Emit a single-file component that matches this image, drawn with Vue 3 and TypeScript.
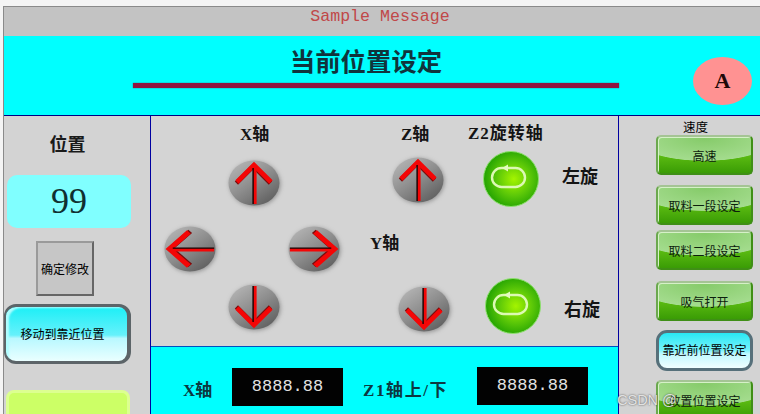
<script setup lang="ts">
type Dir = 'up' | 'down' | 'left' | 'right'

const arrows: { cls: string; dir: Dir }[] = [
  { cls: 'x-up', dir: 'up' },
  { cls: 'z-up', dir: 'up' },
  { cls: 'y-left', dir: 'left' },
  { cls: 'y-right', dir: 'right' },
  { cls: 'x-down', dir: 'down' },
  { cls: 'z-down', dir: 'down' }
]

// the glyph is drawn pointing up, the others get flipped so the dark side of the stem stays right
const turns: Record<Dir, string> = {
  up: '',
  down: 'translate(26 23) scale(1 -1) translate(-26 -23)',
  left: 'translate(26 23) scale(1.15 1) rotate(-90) scale(-1 1) translate(-26 -23)',
  right: 'translate(26 23) scale(1.15 1) rotate(90) translate(-26 -23)'
}

const speedButtons = [
  { text: '高速', kind: 'green', cls: 'b1' },
  { text: '取料一段设定', kind: 'green', cls: 'b2' },
  { text: '取料二段设定', kind: 'green', cls: 'b3' },
  { text: '吸气打开', kind: 'green', cls: 'b4' },
  { text: '靠近前位置设定', kind: 'cyan', cls: 'b5' },
  { text: '放置位置设定', kind: 'green', cls: 'b6' }
]

const spins = [
  { cls: 'spin-left' },
  { cls: 'spin-right' }
]
</script>

<template>
<div class="page">
  <div class="message">Sample Message</div>

  <div class="banner">
    <div class="title-block">
      <h1>当前位置设定</h1>
      <div class="rule"></div>
    </div>
    <div class="user-badge">A</div>
  </div>

  <div class="main">
    <div class="left">
      <div class="left-title">位置</div>
      <div class="value-box">99</div>
      <div class="confirm">确定修改</div>
      <div class="move-btn">移动到靠近位置</div>
      <div class="lime-btn"></div>
    </div>

    <div class="center">
      <div class="controls">
        <div class="label lb-x">X轴</div>
        <div class="label lb-z">Z轴</div>
        <div class="label lb-z2">Z2旋转轴</div>
        <div class="label lb-y">Y轴</div>
        <div class="label lb-l">左旋</div>
        <div class="label lb-r">右旋</div>

        <svg v-for="a in arrows" :key="a.cls" :class="['arrow', a.cls]" viewBox="0 0 52 46" width="52" height="46">
          <defs>
            <linearGradient :id="'ball-' + a.cls" x1="0.15" y1="0.05" x2="0.85" y2="0.95">
              <stop offset="0" stop-color="#b4b4b4" />
              <stop offset="0.5" stop-color="#8c8c8c" />
              <stop offset="1" stop-color="#5e5e5e" />
            </linearGradient>
          </defs>
          <ellipse cx="26" cy="23" rx="25.5" ry="22.5" :fill="'url(#ball-' + a.cls + ')'" />
          <g :transform="turns[a.dir]">
            <path d="M9 22 L26 5 L43 22" fill="none" stroke="#7a0c0c" stroke-width="4.6" transform="translate(-0.6 1.2)" />
            <path d="M9 22 L26 5 L43 22" fill="none" stroke="#f40606" stroke-width="4.6" />
            <path d="M25.2 8 V44" stroke="#120404" stroke-width="1.6" />
            <path d="M27.2 6 V44" stroke="#f40606" stroke-width="2.8" />
          </g>
        </svg>

        <svg v-for="s in spins" :key="s.cls" :class="['spin', s.cls]" viewBox="0 0 56 56" width="56" height="56">
          <defs>
            <radialGradient :id="'glow-' + s.cls" cx="0.55" cy="0.5" r="0.55">
              <stop offset="0" stop-color="#a4f400" />
              <stop offset="0.55" stop-color="#5cc808" />
              <stop offset="1" stop-color="#22a202" />
            </radialGradient>
          </defs>
          <circle cx="28" cy="28" r="27.5" :fill="'url(#glow-' + s.cls + ')'" stroke="#8fe070" stroke-width="1" />
          <rect x="9" y="17" width="33" height="19" rx="9.5" fill="none" stroke="#dcf9b4" stroke-width="2.4" />
          <path d="M19 17 L25 13.5 V20.5 Z" fill="#e4fcc0" />
        </svg>
      </div>

      <div class="readouts">
        <div class="read-label first">X轴</div>
        <div class="digits">8888.88</div>
        <div class="read-label second">Z1轴上/下</div>
        <div class="digits raised">8888.88</div>
      </div>
    </div>

    <div class="right">
      <div class="speed-title">速度</div>
      <div v-for="b in speedButtons" :key="b.text" :class="['side-btn', b.kind, b.cls]">{{ b.text }}</div>
    </div>
  </div>

  <div class="watermark">CSDN @</div>
</div>
</template>

<style>
html, body {
  margin: 0;
  background: #f4f4f4;
  overflow: hidden;
}
</style>

<style scoped>
.page {
  position: relative;
  width: 756px;
  height: 407px;
  margin: 6px 0 0 3px;
  border-top: 1px solid #8a8a8a;
  border-left: 1px solid #8a8a8a;
  overflow: hidden;
  font-family: "Liberation Serif", "Noto Sans CJK SC", serif;
  color: #000;
}

.message {
  height: 29px;
  background: #c3c3c3;
  color: #c04848;
  font: 16.6px/20px "Liberation Mono", monospace;
  text-align: center;
  padding-right: 4px;
  box-sizing: border-box;
}

.banner {
  height: 80px;
  background: #00ffff;
  display: grid;
  grid-template-columns: 129px 486px 1fr;
  border-bottom: 1px solid #000080;
  box-sizing: border-box;
}

.title-block {
  grid-column: 2;
}

h1 {
  margin: 0;
  padding: 10px 20px 0 0;
  height: 47px;
  box-sizing: border-box;
  text-align: center;
  font-size: 25.4px;
  line-height: 32px;
  font-weight: 700;
  color: #10343c;
}

.rule {
  height: 5px;
  background: #90153f;
  box-shadow: 0 0 1px #3a4a60;
}

.user-badge {
  grid-column: 3;
  width: 59px;
  height: 48px;
  margin: 21px 0 0 74px;
  border-radius: 50%;
  background: #ff9292;
  font: 700 22px/48px "Liberation Serif", serif;
  text-align: center;
  color: #200808;
}

.main {
  display: grid;
  grid-template-columns: 146px 469px 1fr;
  height: 298px;
  background: #d3d3d3;
}

.left {
  display: flex;
  flex-direction: column;
  align-items: flex-start;
}

.left-title {
  width: 127px;
  margin-top: 17px;
  text-align: center;
  font-size: 18px;
  line-height: 24px;
  font-weight: 700;
  color: #1a1a1a;
}

.value-box {
  width: 124px;
  height: 53px;
  margin: 18px 0 0 3px;
  border-radius: 10px;
  background: #80ffff;
  text-align: center;
  font: 36px/53px "Liberation Serif", serif;
  color: #103030;
}

.confirm {
  width: 58px;
  height: 55px;
  margin: 13px 0 0 32px;
  box-sizing: border-box;
  border: 2px solid;
  border-color: #9a9a9a #666 #666 #9a9a9a;
  background: #c6c6c6;
  font: 12px/51px "Noto Sans CJK SC", sans-serif;
  text-align: center;
}

.move-btn {
  width: 127px;
  height: 60px;
  margin-top: 8px;
  padding-right: 8px;
  box-sizing: border-box;
  border: solid #5c6468;
  border-width: 3px 4px 3px 2px;
  border-radius: 12px;
  background: linear-gradient(#1ceff6 0, #66f1fb 52%, #b8f8ff 58%, #eaffff 100%);
  box-shadow: inset 5px 3px 2px -2px #b0fdff;
  font: 12px/54px "Noto Sans CJK SC", sans-serif;
  text-align: center;
}

.lime-btn {
  width: 124px;
  height: 40px;
  margin: 26px 0 0 2px;
  box-sizing: border-box;
  border: 3px solid #dcff90;
  border-radius: 8px;
  background: #ccff66;
}

.center {
  border-left: 1px solid #0000a0;
  border-right: 1px solid #0000a0;
  display: flex;
  flex-direction: column;
}

.controls {
  height: 230px;
  display: grid;
  grid-template-columns: 76px 61px 77px 26px 89px 76px 1fr;
  grid-template-rows: 33px 64px 64px 1fr;
  background: #d4d4d4;
}

.label {
  font-size: 17px;
  line-height: 20px;
  font-weight: 700;
  color: #141414;
  white-space: nowrap;
  justify-self: start;
}

.lb-x { grid-area: 1 / 2; margin: 9px 0 0 13px; }
.lb-z { grid-area: 1 / 5; margin: 9px 0 0 10px; }
.lb-z2 { grid-area: 1 / 5 / 1 / 7; margin: 8px 0 0 77px; letter-spacing: 1px; }
.lb-y { grid-area: 3 / 4 / 3 / 6; margin: 21px 0 0 5px; }
.lb-l { grid-area: 2 / 7; margin: 18px 0 0 6px; font-size: 18px; }
.lb-r { grid-area: 4 / 7; margin: 23px 0 0 8px; font-size: 18px; }

.arrow {
  justify-self: start;
  filter: drop-shadow(1px 1px 2px rgba(90, 90, 90, 0.55));
}

.x-up { grid-area: 2 / 2; margin: 11px 0 0 1px; }
.z-up { grid-area: 2 / 5; margin: 8px 0 0 1px; }
.y-left { grid-area: 3 / 1; margin: 13px 0 0 13px; }
.y-right { grid-area: 3 / 3; margin: 13px 0 0 0; }
.x-down { grid-area: 4 / 2; margin: 7px 0 0 1px; }
.z-down { grid-area: 4 / 5; margin: 9px 0 0 7px; }

.spin {
  justify-self: start;
}

.spin-left { grid-area: 2 / 6; margin: 2px 0 0 3px; }
.spin-right { grid-area: 4 / 6; margin: 1px 0 0 5px; }

.readouts {
  flex: 1;
  border-top: 1px solid #0050c0;
  background: #00ffff;
  display: flex;
  align-items: flex-start;
  padding: 21px 0 0 32px;
}

.read-label {
  font-size: 17px;
  line-height: 20px;
  font-weight: 700;
  color: #0c3840;
  margin-top: 13px;
  white-space: nowrap;
}

.read-label.first { width: 49px; }
.read-label.second { width: 114px; margin-left: 20px; letter-spacing: 1.6px; }

.digits {
  width: 111px;
  height: 38px;
  background: #020202;
  color: #e2e2e2;
  font: 17px/38px "Liberation Mono", monospace;
  text-align: center;
}

.digits.raised {
  margin-top: -1px;
}

.right {
  position: relative;
  display: flex;
  flex-direction: column;
  align-items: flex-start;
}

.speed-title {
  margin: 2px 0 0 64px;
  height: 17px;
  font: 12.5px/17px "Noto Sans CJK SC", sans-serif;
}

.side-btn {
  width: 97px;
  height: 40px;
  margin-left: 37px;
  flex: none;
  box-sizing: border-box;
  font: 12px/38px "Noto Sans CJK SC", sans-serif;
  text-align: center;
  white-space: nowrap;
}

.side-btn.green {
  border: 2px solid;
  border-color: #a4c494 #3f8f16 #3f8f16 #6ba84e;
  border-radius: 5px;
  background:
    radial-gradient(ellipse 75% 62% at 50% 5%, #86cb6a 0, #a4dc8e 97%, transparent 100%),
    linear-gradient(#74c455 0, #5cbc12 50%, #3a9c05 100%);
  box-shadow: inset 1px 1px 0 #d6f0c8;
  color: #0c200c;
}

.side-btn.cyan {
  border: 3px solid #56707a;
  border-radius: 11px;
  background: linear-gradient(#28e8f4 0, #74f2fb 48%, #c0f9ff 60%, #f0ffff 100%);
  line-height: 34px;
  height: 41px;
}

.b2 { margin-top: 10px; }
.b3 { margin-top: 5px; }
.b4 { margin-top: 11px; }
.b5 { margin-top: 9px; }
.b6 { margin-top: 9px; }

.watermark {
  position: absolute;
  left: 613px;
  bottom: 6px;
  font: 14.5px/16px "Liberation Sans", sans-serif;
  color: rgba(238, 238, 238, 0.9);
  text-shadow: 0 0 2px rgba(50, 50, 50, 0.9);
}
</style>
